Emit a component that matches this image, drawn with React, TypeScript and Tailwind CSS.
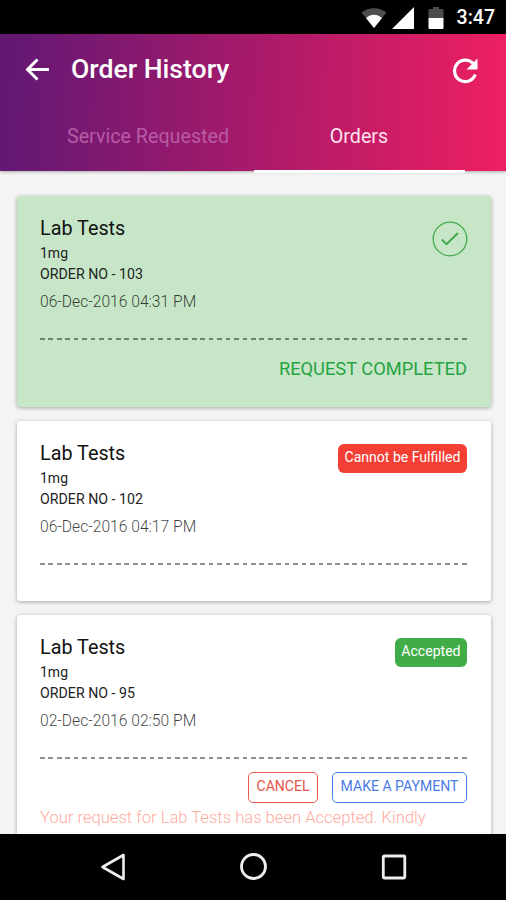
import type { ReactNode } from 'react';

interface Order {
  id: number;
  title: string;
  vendor: string;
  date: string;
  status: 'completed' | 'rejected' | 'accepted';
}

const orders: Order[] = [
  { id: 103, title: 'Lab Tests', vendor: '1mg', date: '06-Dec-2016 04:31 PM', status: 'completed' },
  { id: 102, title: 'Lab Tests', vendor: '1mg', date: '06-Dec-2016 04:17 PM', status: 'rejected' },
  { id: 95, title: 'Lab Tests', vendor: '1mg', date: '02-Dec-2016 02:50 PM', status: 'accepted' },
];

const cardStyles = {
  completed: 'h-[211px] bg-[#c6e6c7]',
  rejected: 'h-[180px] bg-white',
  accepted: 'h-[260px] bg-white',
};

function StatusBar() {
  return (
    <div className="flex h-[34px] shrink-0 items-center justify-end bg-black pt-[2px] pr-[11px]">
      <svg className="mr-[5px]" width="26" height="20" viewBox="0 0 26 20">
        <path d="M0.5 4.5C8 -1.2 18 -1.2 25.5 4.5L13 20Z" fill="#4d4d4d" />
        <path d="M5 10C10 5.500 16 5.500 21 10L13 20Z" fill="#fff" />
      </svg>
      <svg className="mr-[14px]" width="22" height="22" viewBox="0 0 22 22">
        <path d="M22 0V22H0Z" fill="#fff" />
      </svg>
      <svg className="mr-[13px]" width="16" height="22" viewBox="0 0 16 22">
        <path d="M5 0H11V2H14.500Q15.500 2 15.500 3V11H0.500V3Q0.500 2 1.500 2H5Z" fill="#4d4d4d" />
        <path d="M0.500 11H15.500V21Q15.500 22 14.500 22H1.500Q0.500 22 0.500 21Z" fill="#fff" />
      </svg>
      <span className="text-[19.5px] font-medium text-white">3:47</span>
    </div>
  );
}

function Header() {
  return (
    <header className="h-[137px] shrink-0 bg-linear-[92deg,#631874_2%,#a81a6a_50%,#ec1f62_98%] shadow-[0_1px_3px_rgba(0,0,0,0.3)]">
      <div className="flex h-[70px] items-center pr-[28px] pl-[25px]">
        <svg width="25" height="24" viewBox="0 0 25 24" fill="none" stroke="#fff" strokeWidth="2.9">
          <path d="M24 12.500H3M12.500 2.500L2.500 12.500L12.500 22.500" />
        </svg>
        <h1 className="ml-[21px] text-[26.6px] font-medium text-white">Order History</h1>
        <svg className="mt-[3px] ml-auto" width="26" height="26" viewBox="0 0 26 26">
          <path d="M21.500 6A10.700 10.700 0 1 0 23.300 16.500" fill="none" stroke="#fff" strokeWidth="3.2" />
          <path d="M25.500 0.500V11.500H14.500Z" fill="#fff" />
        </svg>
      </div>
      <div className="flex h-[67px] pb-px pl-[42px] text-[19.7px]">
        <div className="flex w-[212px] items-center justify-center text-[#b85aa6]">Service Requested</div>
        <div className="flex w-[210px] items-center justify-center text-[#fde3ee]">Orders</div>
      </div>
      <div className="-mt-px ml-[254px] h-[3px] w-[211px] bg-white" />
    </header>
  );
}

function Badge({ className, children }: { className: string; children: ReactNode }) {
  return (
    <span className={`mt-[3px] flex h-[29px] items-center rounded-[6px] px-[6.5px] pb-[2px] text-[14.05px] text-white ${className}`}>
      {children}
    </span>
  );
}

function OrderCard({ order }: { order: Order }) {
  return (
    <div className={`shrink-0 rounded-[3px] pt-[20px] pr-[24px] pl-[23px] shadow-[0_1px_4px_rgba(0,0,0,0.32)] ${cardStyles[order.status]}`}>
      <div className="flex h-[122px] items-start justify-between">
        <div>
          <h2 className="text-[19.8px] leading-[26px] text-[#111]">{order.title}</h2>
          <p className="text-[14px] leading-[22px] text-[#222]">{order.vendor}</p>
          <p className="text-[14.2px] leading-[20px] text-[#222]">ORDER NO - {order.id}</p>
          <p className="mt-[6px] text-[15.65px] leading-[24px] font-light text-black/75">{order.date}</p>
        </div>
        {order.status === 'completed' && (
          <svg className="mt-[5px] -mr-px" width="36" height="36" viewBox="0 0 36 36" fill="none" stroke="#43a84b">
            <circle cx="18" cy="18" r="16.8" strokeWidth="1.3" />
            <path d="M9.700 18.500L14.500 23.200L26 12" strokeWidth="2" />
          </svg>
        )}
        {order.status === 'rejected' && <Badge className="bg-[#f44034]">Cannot be Fulfilled</Badge>}
        {order.status === 'accepted' && <Badge className="bg-[#41ad49]">Accepted</Badge>}
      </div>
      <div className="h-[1.5px] bg-[repeating-linear-gradient(90deg,#00000070_0_4.7px,transparent_4.7px_8.44px)]" />
      {order.status === 'completed' && (
        <p className="mt-[17px] text-right text-[18.3px] leading-[24px] text-[#27a344]">REQUEST COMPLETED</p>
      )}
      {order.status === 'accepted' && (
        <>
          <div className="mt-[13.5px] flex justify-end gap-[14px] text-[14.05px]">
            <button className="flex h-[31px] w-[70px] items-center justify-center rounded-[5px] border-[1.5px] border-[#e5594f] pb-[2px] text-[#e5544a]">
              CANCEL
            </button>
            <button className="flex h-[31px] w-[135px] items-center justify-center rounded-[5px] border-[1.5px] border-[#4a7ee6] pb-[2px] text-[#4a7ce6]">
              MAKE A PAYMENT
            </button>
          </div>
          <p className="mt-[3px] text-[16.6px] leading-[24px] font-light whitespace-nowrap text-[#ffaca0]">
            Your request for Lab Tests has been Accepted. Kindly
          </p>
        </>
      )}
    </div>
  );
}

function NavBar() {
  return (
    <div className="flex h-[66px] shrink-0 items-center justify-between bg-black pr-[99px] pl-[99px]">
      <svg width="28" height="28" viewBox="0 0 28 28" fill="none" stroke="#eee" strokeWidth="2.6" strokeLinejoin="round">
        <path d="M24.500 2V26L3.500 14Z" />
      </svg>
      <svg width="28" height="28" viewBox="0 0 28 28" fill="none" stroke="#eee" strokeWidth="2.8">
        <circle cx="13.500" cy="13.500" r="12" />
      </svg>
      <svg width="26" height="26" viewBox="0 0 26 26" fill="none" stroke="#eee" strokeWidth="2.8">
        <rect x="2.300" y="2" width="21.500" height="22" rx="1" />
      </svg>
    </div>
  );
}

export default function App() {
  return (
    <div className="flex h-[900px] w-[506px] flex-col overflow-hidden bg-[#f4f4f4] font-['Roboto',sans-serif]">
      <StatusBar />
      <Header />
      <main className="flex min-h-0 flex-1 flex-col gap-[14px] overflow-hidden pt-[25px] pr-[15px] pl-[17px]">
        {orders.map((order) => (
          <OrderCard key={order.id} order={order} />
        ))}
      </main>
      <NavBar />
    </div>
  );
}
